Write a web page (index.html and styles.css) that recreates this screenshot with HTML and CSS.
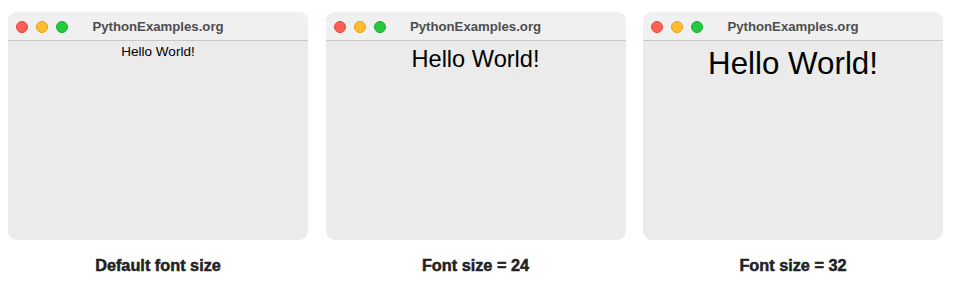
FILE: index.html
```html
<!DOCTYPE html>
<html lang="en">
<head>
	<meta charset="UTF-8">
	<title>Tkinter font size</title>
	<link rel="stylesheet" href="styles.css">
</head>
<body>
	<div class="row">
		<div class="col">
			<div class="window">
				<div class="titlebar">
					<span class="light red"></span>
					<span class="light yellow"></span>
					<span class="light green"></span>
					<span class="title">PythonExamples.org</span>
				</div>
				<div class="content">
					<div class="label size-default">Hello World!</div>
				</div>
			</div>
			<div class="caption">Default font size</div>
		</div>
		<div class="col">
			<div class="window">
				<div class="titlebar">
					<span class="light red"></span>
					<span class="light yellow"></span>
					<span class="light green"></span>
					<span class="title">PythonExamples.org</span>
				</div>
				<div class="content">
					<div class="label size-24">Hello World!</div>
				</div>
			</div>
			<div class="caption">Font size = 24</div>
		</div>
		<div class="col">
			<div class="window">
				<div class="titlebar">
					<span class="light red"></span>
					<span class="light yellow"></span>
					<span class="light green"></span>
					<span class="title">PythonExamples.org</span>
				</div>
				<div class="content">
					<div class="label size-32">Hello World!</div>
				</div>
			</div>
			<div class="caption">Font size = 32</div>
		</div>
	</div>
</body>
</html>
```

FILE: styles.css
```css
* {
	margin: 0;
	padding: 0;
	box-sizing: border-box;
}
body {
	background: #fff;
	font-family: "Liberation Sans", Arial, sans-serif;
}
.row {
	display: flex;
	gap: 17.5px;
	padding: 12px 0 0 8px;
}
.col {
	width: 300px;
	display: flex;
	flex-direction: column;
}
.window {
	height: 228px;
	background: #ebebeb;
	border-radius: 9px;
	overflow: hidden;
	display: flex;
	flex-direction: column;
}
.titlebar {
	position: relative;
	height: 29px;
	background: #f0f0f0;
	border-bottom: 1px solid #c9c9c9;
	display: flex;
	align-items: center;
	padding-left: 8px;
	gap: 8px;
}
.light {
	width: 12px;
	height: 12px;
	border-radius: 50%;
	margin-top: 1px;
}
.red {
	background: #fe5f57;
	border: 0.5px solid #e2463f;
}
.yellow {
	background: #febc2e;
	border: 0.5px solid #e1a116;
}
.green {
	background: #28c840;
	border: 0.5px solid #14ae2b;
}
.title {
	position: absolute;
	left: 0;
	right: 0;
	top: 0;
	bottom: 0;
	display: flex;
	align-items: center;
	justify-content: center;
	font-size: 13.2px;
	font-weight: bold;
	color: #4e4e4e;
	padding-top: 1px;
}
.content {
	flex: 1;
	text-align: center;
}
.label {
	color: #000;
	line-height: normal;
}
.size-default {
	font-size: 13.5px;
	padding-top: 2.8px;
}
.size-24 {
	font-size: 23.6px;
	padding-top: 4.6px;
}
.size-32 {
	font-size: 31.3px;
	padding-top: 4.7px;
}
.caption {
	margin-top: 16px;
	text-align: center;
	font-size: 16.3px;
	font-weight: bold;
	color: #222;
	-webkit-text-stroke: 0.5px #222;
}
```
